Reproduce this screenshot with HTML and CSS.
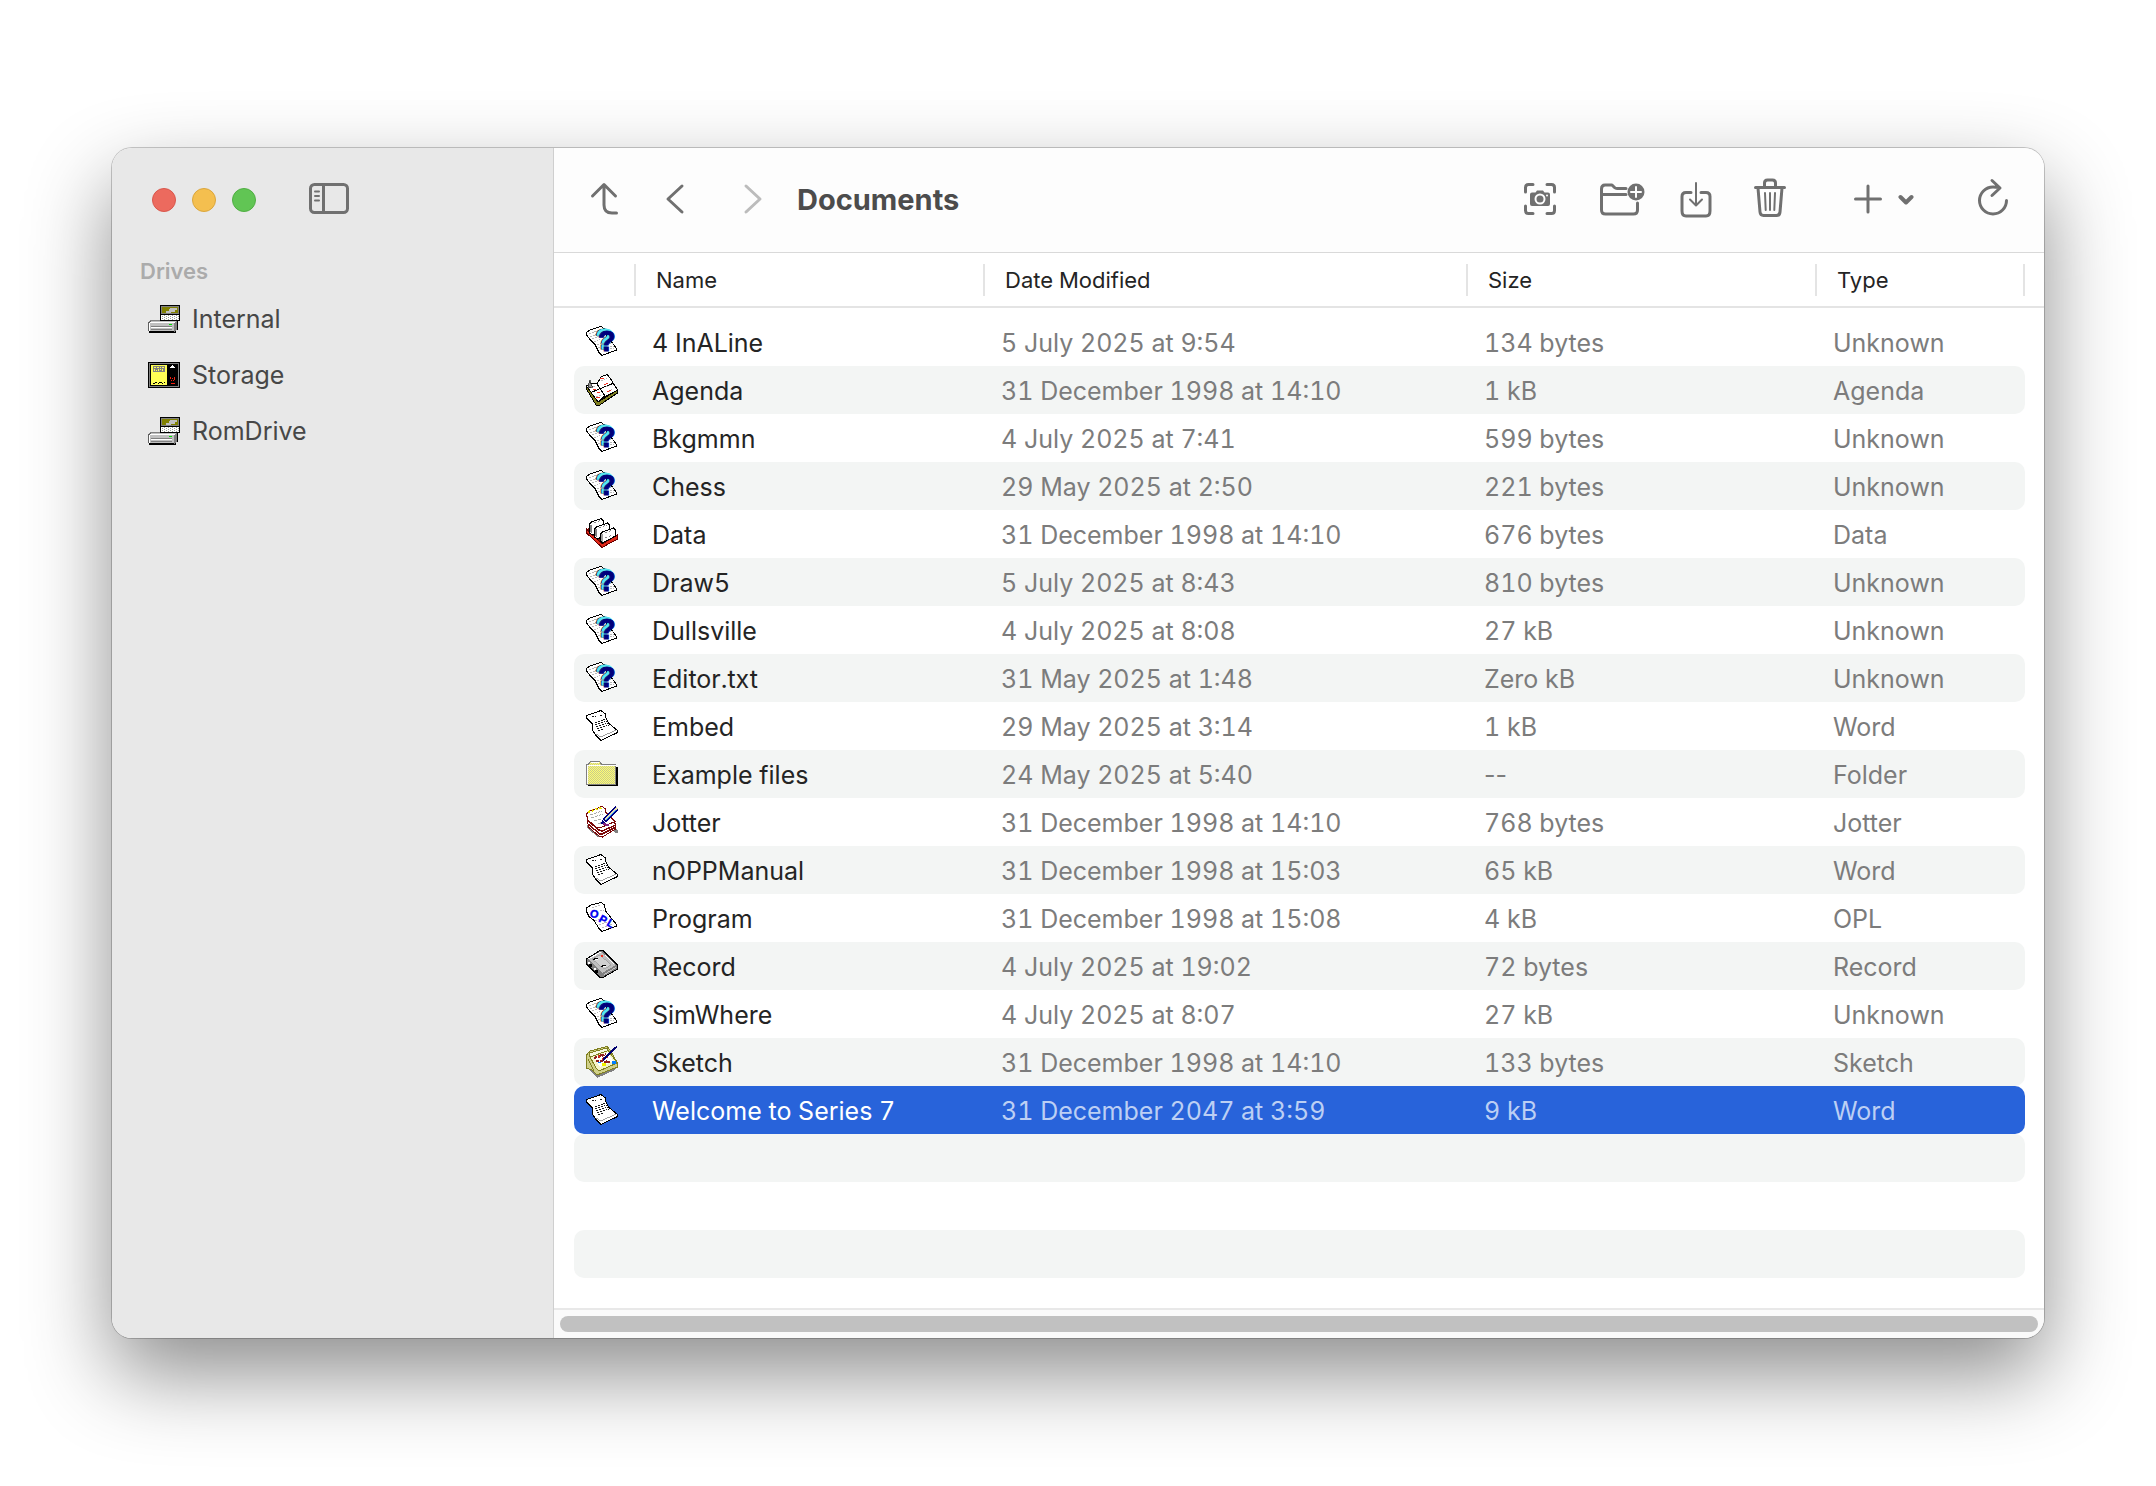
FILE: index.html
```html
<!DOCTYPE html>
<html lang="en">
<head>
<meta charset="utf-8">
<title>Documents</title>
<link rel="stylesheet" href="styles.css">
</head>
<body>
<svg class="sprites" aria-hidden="true">
  <defs>
    <pattern id="dither" width="2" height="2" patternUnits="userSpaceOnUse">
      <path fill="#ffff73" d="M0 0h2v2H0z"/><path fill="#c9c98c" d="M0 0h1v1H0zM1 1h1v1H1z"/>
    </pattern>
    <pattern id="keys" width="4" height="2" patternUnits="userSpaceOnUse">
      <path fill="#fff" d="M0 0h4v2H0z"/><path fill="#9a9f96" d="M0 0h1v1H0zM2 1h1v1H2z"/>
    </pattern>
    <symbol id="drive" viewBox="0 0 32 28">
      <path fill="#000" d="M12 0h20v16H12z"/><path fill="#808000" stroke="#808080" d="M13.500 1.500h17v7h-17z"/>
      <path fill="#c0c0c0" d="M22 3h7v2h-2v2h-4v1h-5V6h3V4h1z"/><path fill="url(#keys)" d="M13 10h18v5H13z"/>
      <path fill="#606060" d="M0 17h2v-1h28v1H2v9H0z"/><path fill="#000" d="M28 16h2v9h-2v3H1v-2h25z"/>
      <path fill="#c0c0c0" d="M3 15h25v3H3z"/><path fill="#fff" d="M1 18h1v-1h25v1H2v8H1z"/><path fill="#c0c0c0" d="M2 18h24v8H2z"/>
      <path fill="#808080" d="M26 18l3-2v8l-3 3zM2 15h10v1H2zM1 16h1v1H1z"/><path fill="#808080" d="M3 21h21v1H3zM3 24h21v1H3z"/>
      <path fill="#fff" d="M3 22h21v1H3z"/><path fill="#00e000" d="M21 19h3v1h-3z"/>
      <path fill="#000" d="M12 15h20v1H12z"/>
    </symbol>
    <symbol id="card" viewBox="0 0 32 26">
      <rect width="32" height="26" rx="1" fill="#000"/><path fill="none" stroke="#808080" d="M1.500 1.500h29v23h-29z"/>
      <path fill="#ffff55" d="M3 3h16v20H3z"/><path fill="#808080" d="M5 4h12v6H5z"/>
      <path fill="#ffff55" d="M6 5h2v1H6zM9 5h2v1H9zM12 5h1v1h-1zM14 5h2v1h-2zM6 7h1v2H6zM8 8h1v1H8zM10 7h1v2h-1zM12 7h1v1h-1zM14 7h1v2h-1z"/>
      <path fill="#000" d="M5 21h2v1H5zM7 20h2v1H7zM10 21h1v1h-1zM11 20h3v1h-3zM14 21h1v1h-1zM16 20h1v1h-1z"/>
      <path fill="#fff" d="M24 3h1v1h1v1h1v1h-5V5h1V4h1z"/>
      <path fill="#f02010" d="M22 15h1v2h-1zM26 15h1v3h-1zM23 18h1v1h-1zM25 18h1v1h-1zM24 16h1v1h-1zM23 21h4v1h-4z"/>
    </symbol>
    <symbol id="unknown" viewBox="0 0 32 32">
      <path fill="#fff" stroke="#000" d="M.5 6.500L4 4l11-3.500 3 2 3 7 9.500 13V24l-14.500 5.500-3-3-4-8-5-5-3-4z"/>
      <path fill="none" stroke="#b8b8b8" stroke-dasharray="2 1" d="M3 8l10-4M4 11l9-4M6 13l8-3M8 16l6-3M11 19l4-2M12 22l4-2M23 18l4-1M24 21l4-1M24 23l4-1"/>
      <g class="glyph-mark">
        <text x="9" y="23" fill="#55e6f2" stroke="#000">?</text>
        <text x="10" y="23" fill="#55e6f2" stroke="#55e6f2">?</text>
        <text x="12" y="25" fill="#00007c" stroke="#00007c">?</text>
      </g>
    </symbol>
    <symbol id="agenda" viewBox="0 0 32 32">
      <path fill="#808020" stroke="#000" d="M.5 12L1 16l9 15 3 .5L31.500 19v-3L12 28z"/>
      <path fill="#fff" stroke="#000" d="M.5 12L5 9l6 1 4-7 6-2.500L24 4l7.500 12-9 5-5 2L12 28z"/>
      <path fill="#909090" stroke="#000" stroke-width=".6" d="M2 12l2-6 1 4 2 3-4 1z"/>
      <path fill="none" stroke="#000" d="M11 10l8 12M6 18l22-9"/>
      <path fill="none" stroke="#bbb" stroke-dasharray="2 1" d="M7 13l3-1M10 23l5-2M15 7l6-3M20 13l4-2M22 18l5-3"/>
      <path fill="none" stroke="#f03020" d="M14 5l4-1M7 16l3-1M18 11l4-2M10 24l4-1M21 18l4-2M11 19l3-1"/>
    </symbol>
    <symbol id="data" viewBox="0 0 32 32">
      <path fill="#e02818" stroke="#600" d="M.5 11L16 26l15.500-9v4L16 29.500.5 15z"/>
      <path fill="#801008" d="M1 11l4-2 22 6 4 2-15 9z"/>
      <path fill="#fff" stroke="#000" d="M3.500 15V6l2-2L15 .5l2 2V11l-11 6z"/>
      <path fill="#808080" d="M4 7h2v9l-2-2z"/>
      <path fill="#fff" stroke="#000" d="M8.500 19v-8l2-2 11-4 2 2v8l-12 6z"/>
      <path fill="#808080" d="M9 11h2v9l-2-2z"/>
      <path fill="#fff" stroke="#000" d="M14.500 23v-7l2-2 11-4 2 2v6l-13 7z"/>
      <path fill="#a0a0a0" d="M15 16h2v8l-2-1z"/>
      <path fill="none" stroke="#555" stroke-width=".7" stroke-dasharray="2 2" d="M8 5l7-3M13 10l8-3M19 15l7-3M19 20l7-3"/>
    </symbol>
    <symbol id="word" viewBox="0 0 32 32">
      <path fill="#fff" stroke="#000" d="M.5 5.500L15 .5l4 3v3l4 7 8.500 7v2L15 30.500l-5-5-4-6v-6L.5 8z"/>
      <path fill="none" stroke="#888" stroke-width=".8" d="M10 24l5 3 15-7"/>
      <path fill="none" stroke="#000" stroke-width=".9" stroke-dasharray="2 1" d="M6 7l4-1M14 5h3M9 13l11-4M9 15l12-4M10 17l12-4M11 19l12-4M12 21l5-2"/>
    </symbol>
    <symbol id="folder" viewBox="0 0 32 32">
      <path fill="#000" d="M2 9h30v19H2z"/>
      <path fill="url(#dither)" stroke="#808080" d="M.5 26.500v-20l2-.5 2-2.500h9l2 2.500h14v20.500z"/>
      <path fill="#fff" d="M1 7h29v1H2v18H1zM5 4h8v1H5z"/>
    </symbol>
    <symbol id="jotter" viewBox="0 0 32 32">
      <path fill="#808080" d="M1 19l15 8 11-5 5 2v3h-3l-2-2-13 6h-2L1 22z"/>
      <path fill="#fff" stroke="#7c0808" d="M.5 8l2 13 11 9.500 3 .5 13-8v-5L21 9z"/>
      <path fill="none" stroke="#7c0808" stroke-width="1.500" d="M2 15l11 9 3 1 14-6M3 19l11 9h2l14-7"/>
      <path fill="#fff" stroke="#7c0808" d="M.5 8L3 5 16 .5l3 2 1 4 9 9L14 22l-4-1-8-7z"/>
      <path fill="none" stroke="#e8e000" stroke-width="2" stroke-dasharray="2 2" d="M2 6l15-5"/>
      <path fill="none" stroke="#aaa" stroke-dasharray="3 1" d="M4 9l12-4M5 12l12-4M8 15l7-2M12 18l5-2"/>
      <path fill="#802080" d="M15 17h5v1h3v2h-3z"/>
      <path stroke="#000080" stroke-width="5" d="M18 15L31 2"/><path stroke="#e8e0b0" stroke-width="1.500" d="M19 14L31 2"/>
      <path stroke="#38a8ff" stroke-width="1" d="M20 14L30 4"/><path fill="#000080" d="M15 18l1-4 3 3z"/>
    </symbol>
    <symbol id="opl" viewBox="0 0 32 32">
      <path fill="#fff" stroke="#000" d="M.5 6L5 3 15 .5l3 2 2 7 10.500 13V24L16 29.500l-3-3-5-8-5-4-2-4z"/>
      <path fill="none" stroke="#bbb" stroke-dasharray="2 1" d="M6 6l9-3M14 9l4-1M9 19l5-2M13 23l8-3M16 26l10-4"/>
      <g fill="#0000f0" stroke="#0000f0" stroke-width=".4" class="glyph-opl">
        <text transform="translate(3 14) rotate(20)">O</text><text transform="translate(12 19) rotate(30)">P</text><text transform="translate(20 23) rotate(30)">L</text>
      </g>
    </symbol>
    <symbol id="tape" viewBox="0 0 32 32">
      <path fill="#808080" stroke="#000" d="M.5 9L14 .5h3L31.500 15v4L17 27.500h-3L.5 14z"/>
      <path fill="#c0c0c0" d="M2 9L15 2l15 13-14 8z"/>
      <path fill="none" stroke="#fff" d="M2 9l13-7M19 5l9 9"/>
      <path fill="#d0d0d0" stroke="#999" stroke-width=".7" d="M6 9l8-4 11 10-7 4z"/>
      <path fill="#000" d="M8 8h4v1H8zM7 9h2v1H7zM16 15h4v1h-4zM15 16h2v1h-2z"/>
      <path fill="#fff" d="M9 9h3v1H9zM17 16h3v1h-3zM2 12h2v2H2zM8 18h2v2H8z"/><path fill="#f03020" d="M15 5h2v2h-2z"/>
      <path fill="#c8c8c8" d="M18 24l12-7v1l-12 7z"/><path fill="#000" d="M3 14h3v3H3zM9 20h3v3H9z"/>
    </symbol>
    <symbol id="sketch" viewBox="0 0 32 32">
      <path fill="#808080" d="M3 24l8 8 18-8 3-5z"/>
      <path fill="#d0d088" stroke="#808020" d="M.5 9L4 5l17-4.500L24 4l7.500 13v4L11 29l-5-5-5.500-2z"/>
      <path fill="#f4f4c8" stroke="#808020" d="M3 9l19-5 9 13-18 8-3-3z"/>
      <path fill="#f8f8e0" stroke="#808020" d="M3 7l18-5v3L4 11z"/>
      <path fill="#fff" d="M8 12l14-6 5 9-13 6z"/>
      <path stroke="#902020" stroke-width="2" d="M8 12l12-4M10 15l14 1M15 8l7 9" stroke-dasharray="3 1"/>
      <path stroke="#e02818" stroke-width="1.500" d="M16 13l6-2M12 10l2 1"/>
      <path fill="#f0f000" d="M16 17h4v3h-4z"/><path fill="#0080ff" d="M12 16h3v1h-3zM26 15h4v3h-4z"/>
      <path fill="#fff" stroke="#808020" d="M2 13l6 12"/><path stroke="#000070" stroke-width="2" d="M17 14L31 .5"/>
    </symbol>
  </defs>
</svg>

<div class="window">
  <aside class="sidebar">
    <div class="titlebar">
      <div class="lights">
        <button class="light light-close" aria-label="Close"></button>
        <button class="light light-minimise" aria-label="Minimise"></button>
        <button class="light light-zoom" aria-label="Zoom"></button>
      </div>
      <button class="tool" aria-label="Toggle sidebar">
        <svg width="40" height="34" viewBox="0 0 40 34"><rect x="1.500" y="1.500" width="37" height="28" rx="4"/><path d="M14.500 1.500v28"/><path class="thin" d="M6 8.500h4M6 13h4M6 17.500h4"/></svg>
      </button>
    </div>
    <h2 class="section-title">Drives</h2>
    <nav class="drives">
      <a class="drive" href="#internal"><svg class="pixel" width="32" height="28"><use href="#drive"/></svg>Internal</a>
      <a class="drive" href="#storage"><svg class="pixel" width="32" height="26"><use href="#card"/></svg>Storage</a>
      <a class="drive" href="#romdrive"><svg class="pixel" width="32" height="28"><use href="#drive"/></svg>RomDrive</a>
    </nav>
  </aside>

  <main class="content">
    <header class="toolbar">
      <div class="navigation">
        <button class="tool" aria-label="Enclosing folder"><svg width="28" height="36" viewBox="0 0 28 36"><path d="M2.500 15L14 3.500 25.500 15M14 4v20q0 8 8 8h4.500"/></svg></button>
        <button class="tool" aria-label="Back"><svg width="20" height="32" viewBox="0 0 20 32"><path d="M17 3L3 16l14 13"/></svg></button>
        <button class="tool tool-forward" aria-label="Forward" disabled><svg width="20" height="32" viewBox="0 0 20 32"><path d="M3 3l14 13L3 29"/></svg></button>
      </div>
      <h1 class="title">Documents</h1>
      <div class="actions">
        <button class="tool" aria-label="Screenshot">
          <svg width="34" height="34" viewBox="0 0 34 34"><path d="M2.500 10V5.500q0-3 3-3H10M24 2.500h4.500q3 0 3 3V10M31.500 24v4.500q0 3-3 3H24M10 31.500H5.500q-3 0-3-3V24"/><path class="solid" d="M9 10.500h3.500l1.500-2h6l1.500 2H25q2 0 2 2V22q0 2-2 2H9q-2 0-2-2v-9.500q0-2 2-2z"/><circle class="hole" cx="17" cy="17" r="4.500"/><circle class="dot" cx="24" cy="13.500" r="1"/></svg>
        </button>
        <button class="tool tool-folder" aria-label="New folder">
          <svg width="46" height="36" viewBox="0 0 46 36"><path d="M27 7.500H18q-1.500 0-2.500-1T13 4H6Q2.500 4 2.500 8v21q0 4 4 4h28q4 0 4-4v-7M2.500 13.500H27"/><circle class="solid" cx="37" cy="11" r="8.500"/><path class="plus" d="M32 11h10M37 6v10"/></svg>
        </button>
        <button class="tool" aria-label="Download">
          <svg width="32" height="38" viewBox="0 0 32 38"><path d="M11 12.500H6q-4 0-4 4V31q0 5 4 5h20q4 0 4-5V16.500q0-4-4-4h-5"/><path class="thin" d="M16 3v22M10 19.500l6 6 6-6"/></svg>
        </button>
        <button class="tool" aria-label="Delete">
          <svg width="32" height="42" viewBox="0 0 32 42"><path d="M1.500 9.500h29M10.500 9V5q0-3 3-3h5q3 0 3 3v4M4 10l2 24q.3 3.500 3.500 3.500h13q3.200 0 3.500-3.500l2-24"/><path class="thin" d="M11 15l.7 17M16 15v17M21 15l-.7 17"/></svg>
        </button>
        <button class="tool tool-add" aria-label="Add">
          <svg width="60" height="30" viewBox="0 0 60 30"><path d="M1.500 15h25M14 2v26"/><path class="heavy" d="M46.500 13l5.500 5.500 5.500-5.500"/></svg>
        </button>
        <button class="tool tool-refresh" aria-label="Refresh">
          <svg width="32" height="42" viewBox="0 0 32 42"><path d="M16 2.500l8 7.500-8 7.500M23 9.500q-2-.5-6-.5A13.500 13.500 0 1 0 30.500 22.500"/></svg>
        </button>
      </div>
    </header>

    <div class="listing">
      <table class="files">
        <colgroup><col class="col-icon"><col class="col-name"><col class="col-date"><col class="col-size"><col></colgroup>
        <thead>
          <tr><th></th><th><span>Name</span></th><th><span>Date Modified</span></th><th><span>Size</span></th><th class="last"><span>Type</span></th></tr>
        </thead>
        <tbody>
          <tr><td><svg class="pixel"><use href="#unknown"/></svg></td><td>4 InALine</td><td>5 July 2025 at 9:54</td><td>134 bytes</td><td>Unknown</td></tr>
          <tr><td><svg class="pixel"><use href="#agenda"/></svg></td><td>Agenda</td><td>31 December 1998 at 14:10</td><td>1 kB</td><td>Agenda</td></tr>
          <tr><td><svg class="pixel"><use href="#unknown"/></svg></td><td>Bkgmmn</td><td>4 July 2025 at 7:41</td><td>599 bytes</td><td>Unknown</td></tr>
          <tr><td><svg class="pixel"><use href="#unknown"/></svg></td><td>Chess</td><td>29 May 2025 at 2:50</td><td>221 bytes</td><td>Unknown</td></tr>
          <tr><td><svg class="pixel"><use href="#data"/></svg></td><td>Data</td><td>31 December 1998 at 14:10</td><td>676 bytes</td><td>Data</td></tr>
          <tr><td><svg class="pixel"><use href="#unknown"/></svg></td><td>Draw5</td><td>5 July 2025 at 8:43</td><td>810 bytes</td><td>Unknown</td></tr>
          <tr><td><svg class="pixel"><use href="#unknown"/></svg></td><td>Dullsville</td><td>4 July 2025 at 8:08</td><td>27 kB</td><td>Unknown</td></tr>
          <tr><td><svg class="pixel"><use href="#unknown"/></svg></td><td>Editor.txt</td><td>31 May 2025 at 1:48</td><td>Zero kB</td><td>Unknown</td></tr>
          <tr><td><svg class="pixel"><use href="#word"/></svg></td><td>Embed</td><td>29 May 2025 at 3:14</td><td>1 kB</td><td>Word</td></tr>
          <tr><td><svg class="pixel"><use href="#folder"/></svg></td><td>Example files</td><td>24 May 2025 at 5:40</td><td class="no-size">--</td><td>Folder</td></tr>
          <tr><td><svg class="pixel"><use href="#jotter"/></svg></td><td>Jotter</td><td>31 December 1998 at 14:10</td><td>768 bytes</td><td>Jotter</td></tr>
          <tr><td><svg class="pixel"><use href="#word"/></svg></td><td>nOPPManual</td><td>31 December 1998 at 15:03</td><td>65 kB</td><td>Word</td></tr>
          <tr><td><svg class="pixel"><use href="#opl"/></svg></td><td>Program</td><td>31 December 1998 at 15:08</td><td>4 kB</td><td>OPL</td></tr>
          <tr><td><svg class="pixel"><use href="#tape"/></svg></td><td>Record</td><td>4 July 2025 at 19:02</td><td>72 bytes</td><td>Record</td></tr>
          <tr><td><svg class="pixel"><use href="#unknown"/></svg></td><td>SimWhere</td><td>4 July 2025 at 8:07</td><td>27 kB</td><td>Unknown</td></tr>
          <tr><td><svg class="pixel"><use href="#sketch"/></svg></td><td>Sketch</td><td>31 December 1998 at 14:10</td><td>133 bytes</td><td>Sketch</td></tr>
          <tr class="selected"><td><svg class="pixel"><use href="#word"/></svg></td><td>Welcome to Series 7</td><td>31 December 2047 at 3:59</td><td>9 kB</td><td>Word</td></tr>
          <tr><td></td><td></td><td></td><td></td><td></td></tr>
          <tr><td></td><td></td><td></td><td></td><td></td></tr>
          <tr><td></td><td></td><td></td><td></td><td></td></tr>
        </tbody>
      </table>
    </div>
    <div class="scrollbar"><div class="thumb"></div></div>
  </main>
</div>
</body>
</html>
```
FILE: styles.css
```css
* { box-sizing: border-box; }

body {
  margin: 0;
  padding: 148px 112px;
  background: #fff;
  font-family: Inter, "Liberation Sans", sans-serif;
  font-size: 25px;
  color: #242424;
}

.sprites { position: absolute; width: 0; height: 0; }

.window {
  display: flex;
  border-radius: 20px;
  overflow: hidden;
  background: #fff;
  box-shadow: 0 0 0 1px rgba(0, 0, 0, 0.2), 0 36px 84px rgba(0, 0, 0, 0.45);
}

/* Sidebar */
.sidebar {
  flex: none;
  width: 442px;
  background: #e8e8e8;
  border-right: 1px solid #cfcfcf;
}

.titlebar {
  display: flex;
  align-items: center;
  gap: 49px;
  height: 104px;
  padding-left: 40px;
}

.lights { display: flex; gap: 16px; }

.light {
  width: 24px;
  height: 24px;
  padding: 0;
  border: 1px solid;
  border-radius: 50%;
}
.light-close { background: #ec6a5e; border-color: #d9574c; }
.light-minimise { background: #f4bf4f; border-color: #dba63c; }
.light-zoom { background: #61c554; border-color: #50ae43; }

.section-title {
  margin: 3px 0 0;
  padding-left: 28px;
  font-size: 22px;
  line-height: 32px;
  font-weight: 600;
  color: #ababab;
}

.drives { display: flex; flex-direction: column; padding: 4px 0 0 36px; }

.drive {
  display: flex;
  align-items: center;
  gap: 12px;
  height: 56px;
  color: #474747;
  text-decoration: none;
}

/* Toolbar */
.content { flex: 1; min-width: 0; display: flex; flex-direction: column; }

.toolbar {
  display: flex;
  align-items: center;
  height: 105px;
  padding: 0 28px 2px 26px;
  background: #fdfdfd;
  border-bottom: 1px solid #d9d9d9;
}

.navigation { display: flex; gap: 23px; }

.tool {
  display: flex;
  align-items: center;
  justify-content: center;
  width: 48px;
  height: 48px;
  padding: 0;
  border: 0;
  background: none;
  color: #707070;
}
.tool:disabled { color: #bcbcbc; }
.tool-forward { margin-left: 7px; }

.tool svg {
  flex: none;
  fill: none;
  stroke: currentColor;
  stroke-width: 3;
  stroke-linecap: round;
  stroke-linejoin: round;
}
.tool .thin { stroke-width: 2; }
.tool .heavy { stroke-width: 4; }
.tool .solid { fill: currentColor; stroke: none; }
.tool .hole { stroke: #fdfdfd; stroke-width: 2; }
.tool .dot { fill: #fdfdfd; stroke: none; }
.tool .plus { stroke: #fdfdfd; stroke-width: 2; }

.title {
  flex: 1;
  margin: 0;
  padding: 2px 0 0 20px;
  font-size: 29px;
  line-height: 40px;
  font-weight: 700;
  color: #4c4c4c;
}

.actions { display: flex; gap: 26px; }
.tool-folder { margin-left: 8px; }
.tool-add { width: 60px; margin-left: 34px; }
.tool-refresh { margin-left: 28px; }

/* File list */
.listing {
  padding: 0 19px 30px 20px;
  background: linear-gradient(#e4e4e4, #e4e4e4) 0 53px / 100% 2px no-repeat;
}

.files {
  width: 100%;
  table-layout: fixed;
  border-spacing: 0;
  font-variant-numeric: tabular-nums;
}
.col-icon { width: 60px; }
.col-name { width: 349px; }
.col-date { width: 483px; }
.col-size { width: 349px; }

.files th {
  height: 65px;
  padding: 11px 0 0;
  vertical-align: top;
  text-align: left;
  font-size: 22px;
  line-height: 32px;
  font-weight: 400;
}
.files th span {
  display: block;
  padding-left: 20px;
  border-left: 2px solid #e4e4e4;
}
.files .last span { border-right: 2px solid #e4e4e4; }

.files td {
  height: 48px;
  padding: 2px 0 0 18px;
  line-height: 32px;
  color: #7c7c7c;
  white-space: nowrap;
}
.files td:first-child { padding: 0 0 0 12px; border-radius: 10px 0 0 10px; }
.files td:last-child { border-radius: 0 10px 10px 0; }
.files td:nth-child(2) { color: #242424; }
.files .no-size { font-variant-numeric: normal; }
.files tr:nth-child(even) td { background: #f3f5f4; }
.files .selected td { background: #2863da; color: #bccff4; }
.files .selected td:nth-child(2) { color: #fff; }

.pixel { display: block; shape-rendering: crispEdges; }
.files .pixel { width: 32px; height: 32px; }

.glyph-mark {
  font: 700 29px "Liberation Sans", sans-serif;
  stroke-width: 1px;
}
.glyph-opl { font: 700 11px "Liberation Sans", sans-serif; }

.scrollbar {
  padding: 6px;
  background: #fafafa;
  border-top: 2px solid #e8e8e8;
}
.thumb { height: 16px; border-radius: 8px; background: #c1c1c1; }
```
